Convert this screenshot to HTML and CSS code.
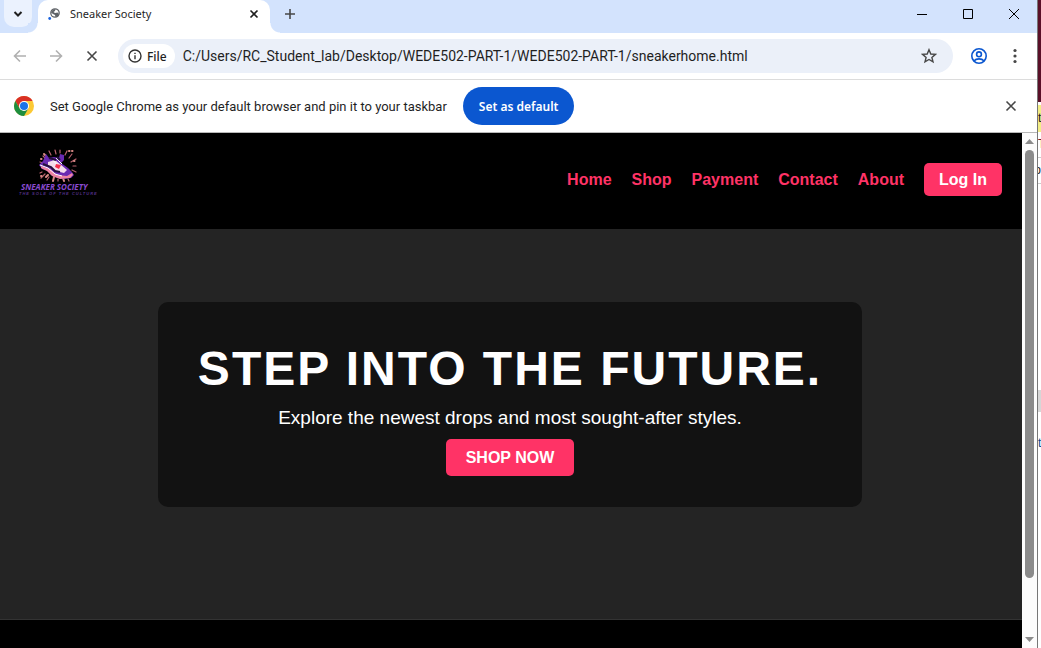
FILE: index.html
```html
<!DOCTYPE html>
<html lang="en">
<head>
<meta charset="utf-8">
<title>Sneaker Society</title>
<link rel="stylesheet" href="styles.css">
</head>
<body>
<div class="desktop">
  <div class="window">
    <div class="tabstrip">
      <button class="tab-search" aria-label="Search tabs"><svg width="10" height="10" viewBox="0 0 10 10"><path d="M1.5 3l3.500 3.500L8.500 3" class="line-dark"/></svg></button>
      <div class="tab">
        <svg class="favicon" width="14" height="14" viewBox="0 0 14 14"><circle cx="8" cy="6" r="4.200" fill="#fff" stroke="#5f6368" stroke-width="1.300"/><path d="M4 5.500C5 2.500 7 2 8.500 2L8 4 6.500 5 8 6l2.500-.5L12 7c-.5 2-2 3-3.500 3L8 8 6 7z" fill="#5f6368"/><circle cx="2.700" cy="11.500" r="1.400" fill="#1a63e0"/></svg>
        <span class="tab-title">Sneaker Society</span>
        <button class="tab-close" aria-label="Close tab"><svg width="10" height="10" viewBox="0 0 10 10"><path d="M1.500 1.500l7 7m0-7l-7 7" class="line-mid"/></svg></button>
      </div>
      <button class="new-tab" aria-label="New tab"><svg width="12" height="12" viewBox="0 0 12 12"><path d="M6 1v10M1 6h10" class="line-gray"/></svg></button>
      <div class="win-controls">
        <button aria-label="Minimize"><svg width="12" height="12" viewBox="0 0 12 12"><path d="M1 6.500h10" class="line-thin"/></svg></button>
        <button aria-label="Maximize"><svg width="12" height="12" viewBox="0 0 12 12"><path d="M1.500 1.500h9v9h-9z" class="line-thin"/></svg></button>
        <button aria-label="Close"><svg width="12" height="12" viewBox="0 0 12 12"><path d="M1 1l10 10M11 1L1 11" class="line-thin"/></svg></button>
      </div>
    </div>

    <div class="toolbar">
      <button class="tool" aria-label="Back"><svg width="14" height="14" viewBox="0 0 14 14"><path d="M13 7H1.500M7 1.500L1.500 7 7 12.500" class="line-pale"/></svg></button>
      <button class="tool" aria-label="Forward"><svg width="14" height="14" viewBox="0 0 14 14"><path d="M1 7h11.500M7 1.500L12.500 7 7 12.500" class="line-pale"/></svg></button>
      <button class="tool" aria-label="Stop"><svg width="12" height="12" viewBox="0 0 12 12"><path d="M1.500 1.500l9 9m0-9l-9 9" class="line-gray"/></svg></button>
      <div class="omnibox">
        <button class="chip"><svg width="14" height="14" viewBox="0 0 14 14"><circle cx="7" cy="7" r="6" fill="none" stroke="#333" stroke-width="1.400"/><path d="M7 6.200v4M7 3.700v1.400" stroke="#333" stroke-width="1.400"/></svg>File</button>
        <input class="url" type="text" aria-label="Address" value="C:/Users/RC_Student_lab/Desktop/WEDE502-PART-1/WEDE502-PART-1/sneakerhome.html">
        <button class="star" aria-label="Bookmark this page"><svg width="16" height="16" viewBox="0 0 16 16"><path d="M8 1.700l1.800 4.300 4.600.4-3.500 3 1.100 4.500L8 11.500l-4 2.400 1.100-4.500-3.500-3L6.200 6z" fill="none" stroke="#474747" stroke-width="1.400"/></svg></button>
      </div>
      <button class="tool" aria-label="Profile"><svg width="18" height="18" viewBox="0 0 18 18" fill="none" stroke="#0b57d0" stroke-width="1.600"><circle cx="9" cy="9" r="7.200"/><circle cx="9" cy="7.300" r="2.400"/><path d="M3.800 14c1.600-1.600 3.400-2.100 5.200-2.100s3.600.5 5.200 2.100"/></svg></button>
      <button class="tool" aria-label="Menu"><svg width="4" height="16" viewBox="0 0 4 16" fill="#474747"><circle cx="2" cy="2.500" r="1.600"/><circle cx="2" cy="8" r="1.600"/><circle cx="2" cy="13.500" r="1.600"/></svg></button>
    </div>

    <div class="infobar">
      <svg width="20" height="20" viewBox="0 0 20 20"><circle cx="10" cy="10" r="10" fill="#fcc934"/><path d="M1.340 5A10 10 0 0 1 18.660 5H10L5.670 12.500z" fill="#d93025"/><path d="M1.340 5A10 10 0 0 0 10 20l4.330-7.500-8.660 0z" fill="#1e8e3e"/><circle cx="10" cy="10" r="5" fill="#fff"/><circle cx="10" cy="10" r="4" fill="#1a73e8"/></svg>
      <span class="info-text">Set Google Chrome as your default browser and pin it to your taskbar</span>
      <button class="default-btn">Set as default</button>
      <button class="info-close" aria-label="Dismiss"><svg width="12" height="12" viewBox="0 0 12 12"><path d="M1.500 1.500l9 9m0-9l-9 9" class="line-gray"/></svg></button>
    </div>

    <div class="viewport">
      <div class="page">
        <header class="site-header">
          <a href="#" class="logo" aria-label="Sneaker Society">
            <svg width="80" height="50" viewBox="0 0 80 50">
              <g stroke="#b8626e" stroke-width="1.200" stroke-linecap="round">
                <path d="M36 6L35 2M40 5V2M45 7l2-4M49 10l3-4M51 14l5-3M53 18h3M52 22l4 2M31 7l-2-4M26 11l-3-3M23 15l-3-1M22 24l-2 1M25 26l-4 4M29 29l-2 3M38 31v2M48 31l1 2"/>
              </g>
              <path d="M26 29l2-2M34 29l-1 4M43 30l1 3M24 6l1 1M52 3h.5M49 3h.5M21 11h.5M54 13h.5M21 28h.5" stroke="#db8b86" stroke-width="2" stroke-linecap="round"/>
              <path d="M26 6l3 4 5-1 5 1 1-4 4 1v5l-3 3 7 5 4 4 2 3-3 3-8 1-8-2-7-6-6-2-3-4 4-4z" fill="#6a2ab2"/>
              <path d="M28 14l7-2 5 4 7 6-3 3-8-2-8-5z" fill="#f4dced"/>
              <path d="M21 18l9 3 7 6 10 1 5-3 1 2-3 3-10 1-8-3-5-5-6-3z" fill="#ed83a3"/>
              <path d="M20 17l8 3 7 6 7 2M32 11l6 7M36 10l6 6" fill="none" stroke="#fff" stroke-width="1"/>
              <path d="M23 16l8 3 4 4 5 1M29 10l7 2M37 9l3 3" fill="none" stroke="#25113d" stroke-width="2"/>
              <path d="M36 16l5 1-2 4-4-2z" fill="#f52d4c"/>
              <text x="1" y="42" class="logo-name">SNEAKER SOCIETY</text>
              <text x="-1" y="47" class="logo-tag">THE SOLE OF THE CULTURE</text>
            </svg>
          </a>
          <nav class="nav">
            <a href="#">Home</a>
            <a href="#">Shop</a>
            <a href="#">Payment</a>
            <a href="#">Contact</a>
            <a href="#">About</a>
            <a href="#" class="login">Log In</a>
          </nav>
        </header>
        <main class="hero">
          <section class="card">
            <h1>STEP INTO THE FUTURE.</h1>
            <p>Explore the newest drops and most sought-after styles.</p>
            <a href="#" class="shop">SHOP NOW</a>
          </section>
        </main>
        <div class="below"></div>
      </div>
      <div class="scrollbar">
        <svg width="9" height="5" viewBox="0 0 9 5"><path d="M0 5L4.500 0 9 5z" fill="#8b8b8b"/></svg>
        <div class="track"><div class="thumb"></div></div>
        <svg width="9" height="5" viewBox="0 0 9 5"><path d="M0 0l4.500 5L9 0z" fill="#8b8b8b"/></svg>
      </div>
    </div>
  </div>
  <div class="behind">
    <div class="behind-dark"></div>
    <div class="behind-yellow">t</div>
    <div class="behind-row behind-red">T</div>
    <div class="behind-row behind-end">p</div>
    <div class="behind-gray"></div>
    <div class="behind-blue">t</div>
  </div>
</div>
</body>
</html>
```
FILE: styles.css
```css
* { box-sizing: border-box; }
body { margin: 0; }
button, input { font: inherit; color: inherit; border: 0; margin: 0; padding: 0; background: none; }
button { display: flex; align-items: center; justify-content: center; flex: none; }
svg { display: block; flex: none; }
a { text-decoration: none; }

.line-dark, .line-mid, .line-gray, .line-pale, .line-thin { fill: none; stroke: #1f1f1f; stroke-width: 2; }
.line-mid { stroke-width: 1.6; }
.line-gray { stroke: #474747; stroke-width: 1.6; }
.line-pale { stroke: #b0b0b0; stroke-width: 1.6; }
.line-thin { stroke: #000; stroke-width: 1; }

.desktop { display: flex; min-height: 100vh; background: #fff; overflow: hidden; }
.window {
  flex: 1; min-width: 0; display: flex; flex-direction: column;
  border-right: 1px solid #777;
  font-family: "Noto Sans", "Open Sans", sans-serif; font-size: 12px; color: #1f1f1f;
}

.tabstrip { display: flex; height: 33px; padding-left: 4px; background: #d3e3fd; }
.tab-search { width: 28px; height: 27px; border-radius: 0 0 10px 10px; background: #ebf2fe; }
.tab {
  position: relative; display: flex; align-items: center; width: 232px; margin-left: 6px;
  padding: 0 8px 6px 9px; background: #fff; border-radius: 10px 10px 0 0; font-size: 11px;
}
.tab::before, .tab::after { content: ""; position: absolute; bottom: 0; width: 10px; height: 10px; }
.tab::before { right: 100%; background: radial-gradient(circle at 0 0, #d3e3fd 9px, #fff 10px); }
.tab::after { left: 100%; background: radial-gradient(circle at 100% 0, #d3e3fd 9px, #fff 10px); }
.tab-title { flex: 1; margin-left: 9px; white-space: nowrap; }
.tab-close { width: 16px; height: 16px; }
.new-tab { width: 28px; height: 27px; margin-left: 6px; }
.win-controls { display: flex; margin-left: auto; }
.win-controls button { width: 46px; height: 27px; }

.toolbar { display: flex; align-items: center; height: 47px; padding: 0 4px 0 2px; border-bottom: 1px solid #dcdcdc; background: #fff; }
.tool { width: 36px; height: 34px; }
.omnibox {
  flex: 1; min-width: 0; display: flex; align-items: center; height: 34px; margin: 0 8px;
  padding: 0 16px 0 5px; border-radius: 17px; background: #ebf0f9;
}
.chip { gap: 5px; height: 24px; padding: 0 8px 0 5px; border-radius: 12px; background: #fff; font-size: 12px; font-weight: 500; }
.url { flex: 1; min-width: 0; margin-left: 8px; font-family: Roboto, "Noto Sans", sans-serif; font-size: 14px; outline: 0; }

.infobar { display: flex; align-items: center; height: 53px; padding: 0 20px 0 14px; border-bottom: 1px solid #b8b8b8; background: #fff; }
.info-text { margin-left: 16px; white-space: nowrap; font-family: Roboto, "Noto Sans", sans-serif; font-size: 13px; }
.default-btn { height: 38px; margin-left: 16px; padding: 0 16px; border-radius: 19px; background: #0b57d0; color: #fff; font-weight: 600; }
.info-close { width: 12px; height: 20px; margin-left: auto; }

.viewport { flex: 1; display: flex; }
.page { flex: 1; min-width: 0; display: flex; flex-direction: column; background: #000; color: #fff; font-family: "Liberation Sans", Arial, sans-serif; }
.site-header { display: flex; justify-content: space-between; padding: 15px 20px 31px; }
.logo svg { overflow: visible; }
.logo-name { font: italic bold 8px "Open Sans", "Liberation Sans", sans-serif; fill: #8a4bd0; }
.logo-tag { font: italic bold 4px "Liberation Sans", Arial, sans-serif; letter-spacing: 1px; fill: #533087; }
.nav { display: flex; align-items: center; gap: 20px; padding-top: 12px; font-size: 16px; font-weight: bold; line-height: 18px; align-self: center; }
.nav a { padding: 8px 0 7px; color: #ff3366; }
.nav .login { padding: 8px 15px 7px; border-radius: 5px; background: #ff3366; color: #fff; }
.hero { display: flex; justify-content: center; padding: 73px 22px 112px 20px; background: #242424; }
.card {
  display: flex; flex-direction: column; align-items: center; gap: 10px;
  padding: 40px 40px 31px; border-radius: 10px; background: #121212; text-align: center;
}
.card h1 { margin: 0; font-size: 48px; line-height: 54px; letter-spacing: 2px; }
.card p { margin: 0; font-size: 19px; line-height: 23px; }
.shop { padding: 10px 20px 9px; border-radius: 5px; background: #ff3366; color: #fff; font-size: 16px; font-weight: bold; line-height: 18px; }
.below { flex: 1; min-height: 28px; border-top: 1px solid #333; }

.scrollbar { display: flex; flex-direction: column; align-items: center; width: 15px; padding: 6px 0; background: #fcfcfc; }
.track { flex: 1; width: 9px; padding: 6px 0; }
.thumb { height: 89%; border-radius: 5px; background: #8b8b8b; }

.behind { flex: none; width: 3px; overflow: hidden; font: 12px "Liberation Sans", Arial, sans-serif; color: #222; }
.behind-dark { height: 102px; background: #5a1028; }
.behind-yellow { height: 27px; margin-top: 3px; background: #f3ee86; line-height: 27px; }
.behind-row { height: 26px; border-bottom: 1px solid #ccc; line-height: 24px; }
.behind-red { color: #7a1c2c; }
.behind-end { display: flex; justify-content: flex-end; }
.behind-gray { height: 22px; margin-top: 206px; background: #d6d6d6; }
.behind-blue { margin-top: 24px; color: #0a4a8a; }
```
